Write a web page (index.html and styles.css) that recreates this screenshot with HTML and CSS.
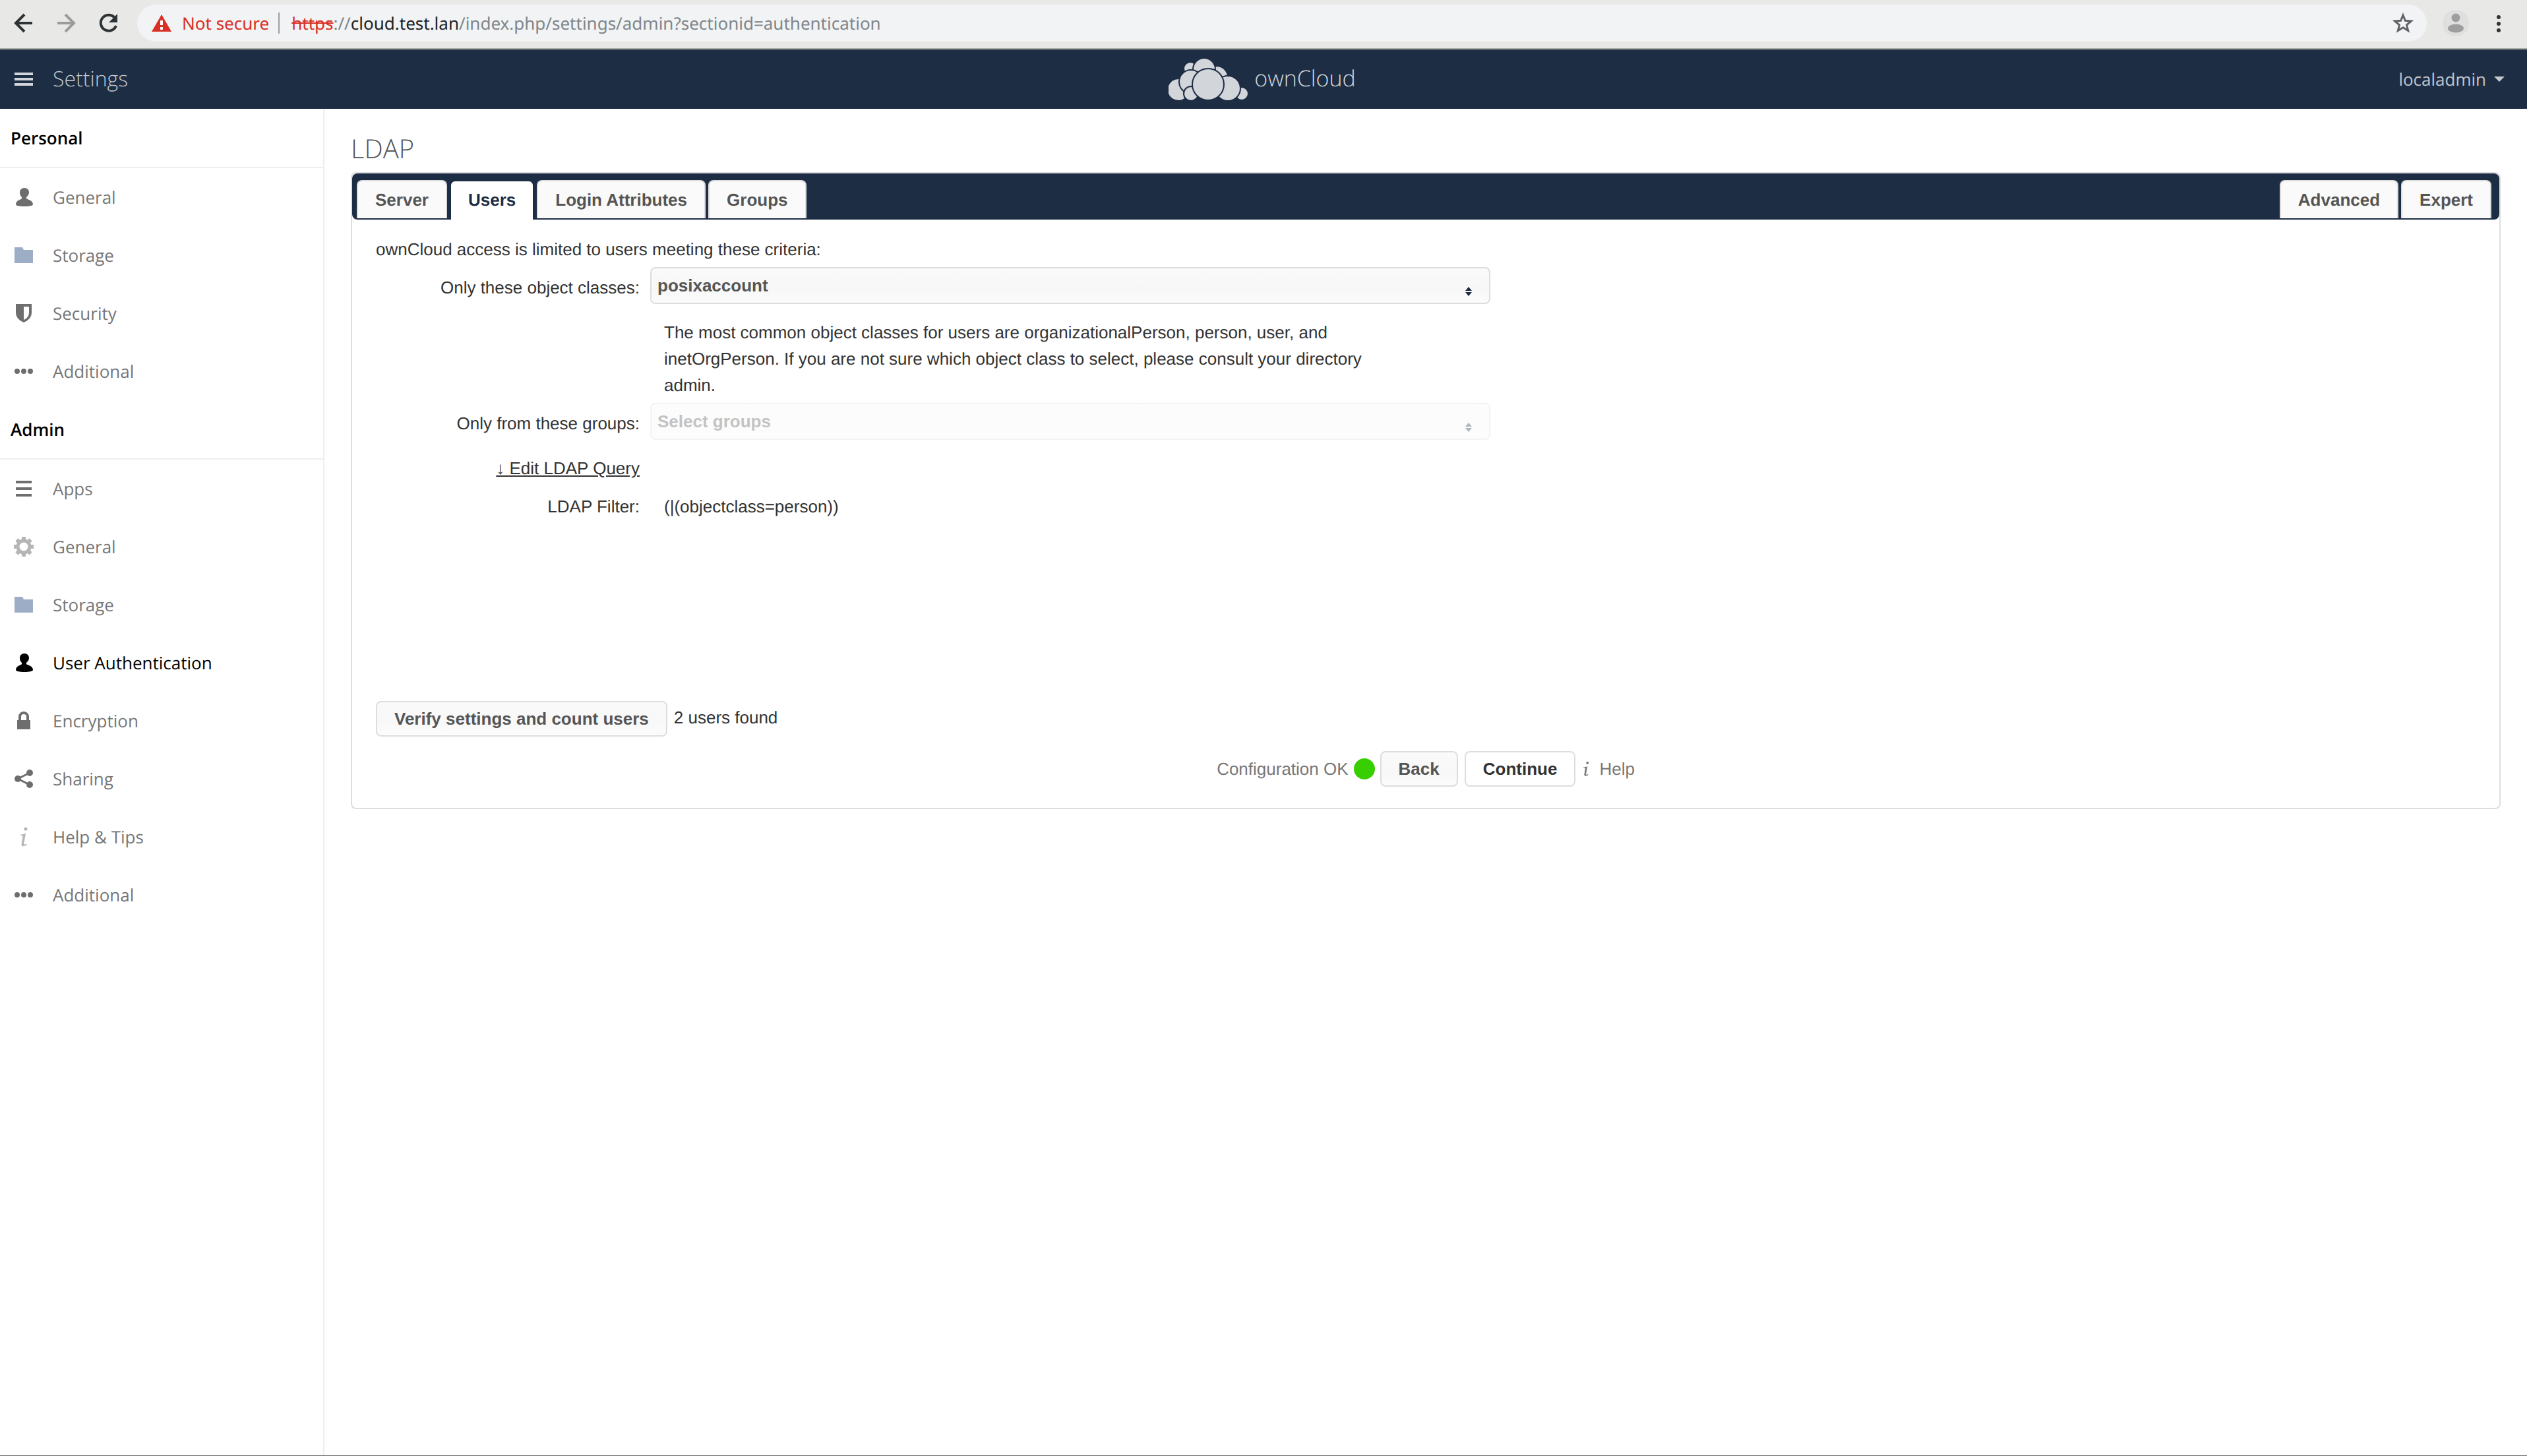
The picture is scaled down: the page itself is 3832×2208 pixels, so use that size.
FILE: index.html
```html
<!DOCTYPE html>
<html lang="en">
<head>
<meta charset="utf-8">
<title>Settings - ownCloud</title>
<link rel="stylesheet" href="styles.css">
</head>
<body>
<svg class="symbols" aria-hidden="true">
  <symbol id="user" viewBox="0 0 32 32"><path d="M17 2c-4.500 0-7 3-7 7 0 3 1 5 3 7v2c-1 2-9 2.500-9 9 0 2 5 3 13 3s13-1 13-3c0-6.500-8-7-10-9v-2c2-2 4-4 4-7 0-4-2.500-7-7-7z"/></symbol>
  <symbol id="folder" viewBox="0 0 32 32"><path d="M2 4h12l2 4h14v20H2z"/></symbol>
  <symbol id="dots" viewBox="0 0 32 32"><circle cx="6" cy="16" r="4"/><circle cx="16" cy="16" r="4"/><circle cx="26" cy="16" r="4"/></symbol>
  <symbol id="info" viewBox="0 0 32 32"><circle cx="19" cy="4" r="2.600"/><path d="M11 13l8-2-3 16c0 1.500 2 .500 4-.500l.500 1.500c-3 2.500-8 3.500-8 0l2-13c0-1.500-1.500-1-3.500-.500z"/></symbol>
</svg>

<div class="toolbar">
  <button class="tool" aria-label="Back"><svg viewBox="0 0 32 32"><path d="M29 16H5M17 3L4 16l13 13" fill="none" stroke="#2e3436" stroke-width="4"/></svg></button>
  <button class="tool" aria-label="Forward"><svg viewBox="0 0 32 32"><path d="M3 16h24M15 3l13 13-13 13" fill="none" stroke="#9b9c9b" stroke-width="4"/></svg></button>
  <button class="tool" aria-label="Reload"><svg viewBox="0 0 32 32"><path d="M26 8A12 12 0 1 0 28 20" fill="none" stroke="#2e3436" stroke-width="4"/><path d="M30 2v13H17z" fill="#2e3436"/></svg></button>
  <div class="address">
    <svg class="warning" viewBox="0 0 30 26"><path d="M15 0l15 26H0z" fill="#d93025"/><path d="M13 9h4v7h-4zM13 19h4v4h-4z" fill="#fff"/></svg>
    <span class="insecure">Not secure</span>
    <span class="divider"></span>
    <span class="url"><s>https</s>://<b>cloud.test.lan</b>/index.php/settings/admin?sectionid=authentication</span>
    <button class="tool star" aria-label="Bookmark"><svg viewBox="0 0 32 32"><path d="M16 4l3.400 8.300 9 .700-6.900 5.800 2.200 8.700L16 22.700l-7.700 4.800 2.200-8.700L3.600 13l9-.700z" fill="none" stroke="#5f6368" stroke-width="3"/></svg></button>
  </div>
  <button class="avatar" aria-label="Profile"><svg viewBox="0 0 40 40"><circle cx="20" cy="20" r="20" fill="#dfdfdf"/><circle cx="20" cy="12" r="6.500" fill="#9e9e9e"/><ellipse cx="20" cy="28" rx="12" ry="6.500" fill="#9e9e9e"/></svg></button>
  <button class="tool" aria-label="Menu"><svg viewBox="0 0 32 32" fill="#2e3436"><circle cx="16" cy="7" r="3"/><circle cx="16" cy="17" r="3"/><circle cx="16" cy="27" r="3"/></svg></button>
</div>

<header class="header">
  <a class="app-menu" href="#"><svg viewBox="0 0 28 20"><path d="M0 0h28v4H0zM0 8h28v4H0zM0 16h28v4H0z" fill="#d2d5da"/></svg>Settings</a>
  <a class="logo" href="#">
    <svg viewBox="0 0 120 64" fill="#d2d5da" stroke="#1d2d44" stroke-width="2">
      <circle cx="33" cy="16" r="10"/><circle cx="73" cy="29" r="17"/><circle cx="54" cy="17" r="17"/>
      <circle cx="15" cy="48" r="17"/><circle cx="34" cy="36" r="18"/><circle cx="34" cy="54" r="11"/>
      <circle cx="111" cy="54" r="10"/><circle cx="90" cy="46" r="19"/><circle cx="60" cy="40" r="24"/>
    </svg>
    <span>ownCloud</span></a>
  <a class="account" href="#">localadmin<svg viewBox="0 0 16 8"><path d="M0 0h16L8 8z" fill="#c6c8cb"/></svg></a>
</header>

<div class="content">
  <nav class="sidebar">
    <h2>Personal</h2>
    <a href="#"><svg><use href="#user"/></svg>General</a>
    <a href="#"><svg class="blue"><use href="#folder"/></svg>Storage</a>
    <a href="#"><svg viewBox="0 0 32 32"><path fill-rule="evenodd" d="M4 2h24v13c0 7-5 12-12 15C9 27 4 22 4 15zM16 6v20c5-2 8-6 8-11V6z"/></svg>Security</a>
    <a href="#"><svg><use href="#dots"/></svg>Additional</a>
    <h2>Admin</h2>
    <a href="#"><svg viewBox="0 0 32 32"><path d="M4 4h24v4H4zM4 14h24v4H4zM4 24h24v4H4z"/></svg>Apps</a>
    <a href="#"><svg class="faint" viewBox="0 0 32 32"><circle cx="16" cy="16" r="9" fill="none" stroke="currentColor" stroke-width="5"/><path d="M16 1v6M16 25v6M1 16h6M25 16h6M5.400 5.400l4 4M22.600 22.600l4 4M5.400 26.600l4-4M22.600 9.400l4-4" stroke="currentColor" stroke-width="6"/></svg>General</a>
    <a href="#"><svg class="blue"><use href="#folder"/></svg>Storage</a>
    <a class="current" href="#"><svg><use href="#user"/></svg>User Authentication</a>
    <a href="#"><svg viewBox="0 0 32 32"><path d="M6 15h20v14H6z"/><path d="M10 16v-6c0-8 12-8 12 0v6" fill="none" stroke="currentColor" stroke-width="4"/></svg>Encryption</a>
    <a href="#"><svg viewBox="0 0 32 32"><path d="M25 7L7 16l18 9" fill="none" stroke="currentColor" stroke-width="3"/><circle cx="25" cy="7" r="5"/><circle cx="7" cy="16" r="5"/><circle cx="25" cy="25" r="5"/></svg>Sharing</a>
    <a href="#"><svg class="faint"><use href="#info"/></svg>Help &amp; Tips</a>
    <a href="#"><svg><use href="#dots"/></svg>Additional</a>
  </nav>

  <main class="main">
    <h1>LDAP</h1>
    <section class="panel">
      <div class="tabs">
        <a class="tab" href="#">Server</a>
        <a class="tab active" href="#">Users</a>
        <a class="tab" href="#">Login Attributes</a>
        <a class="tab" href="#">Groups</a>
        <a class="tab push" href="#">Advanced</a>
        <a class="tab" href="#">Expert</a>
      </div>
      <form class="form">
        <p>ownCloud access is limited to users meeting these criteria:</p>
        <div class="row">
          <label for="classes">Only these object classes:</label>
          <div class="select">
            <select id="classes"><option>posixaccount</option></select>
            <svg viewBox="0 0 10 14"><path d="M5 0l5 6H0zM5 14l5-6H0z"/></svg>
          </div>
        </div>
        <p class="hint">The most common object classes for users are organizationalPerson, person, user, and inetOrgPerson. If you are not sure which object class to select, please consult your directory admin.</p>
        <div class="row">
          <label for="groups">Only from these groups:</label>
          <div class="select disabled">
            <select id="groups" disabled><option>Select groups</option></select>
            <svg viewBox="0 0 10 14"><path d="M5 0l5 6H0zM5 14l5-6H0z"/></svg>
          </div>
        </div>
        <div class="row edit"><a href="#">↓ Edit LDAP Query</a></div>
        <div class="row filter"><span>LDAP Filter:</span><output>(|(objectclass=person))</output></div>
        <div class="verify">
          <button type="button" class="button">Verify settings and count users</button>
          <span>2 users found</span>
        </div>
        <div class="actions">
          <span>Configuration OK</span>
          <span class="status"></span>
          <button type="button" class="button">Back</button>
          <button type="button" class="button primary">Continue</button>
          <a class="help" href="#"><svg><use href="#info"/></svg>Help</a>
        </div>
      </form>
    </section>
  </main>
</div>
</body>
</html>
```

FILE: styles.css
```css
* {
  box-sizing: border-box;
}

body {
  display: flex;
  flex-direction: column;
  min-height: 100vh;
  margin: 0;
  border-bottom: 1px solid #666;
  background: #fff;
  color: #333;
  font: 26px/40px "Liberation Sans", Arial, sans-serif;
  text-rendering: geometricPrecision;
}

a {
  color: inherit;
  text-decoration: none;
}

button {
  padding: 0;
  border: 0;
  background: none;
  font: inherit;
}

svg {
  display: block;
  flex: none;
}

.symbols {
  position: absolute;
  width: 0;
  height: 0;
}

/* Browser toolbar */
.toolbar {
  display: flex;
  align-items: center;
  gap: 32px;
  height: 75px;
  padding: 0 27px 3px 20px;
  border-bottom: 2px solid #a9ada5;
  background: #e8e8e6;
  font: 26px/40px "Noto Sans", sans-serif;
}

.tool,
.tool svg {
  width: 32px;
  height: 32px;
}

.avatar,
.avatar svg {
  width: 40px;
  height: 40px;
}

.toolbar .avatar {
  margin: 0 -3px 0 -8px;
}

.address {
  display: flex;
  flex: 1;
  align-items: center;
  height: 56px;
  margin-left: -4px;
  padding: 0 20px 0 22px;
  border-radius: 28px;
  background: #f1f3f4;
  color: #80868b;
}

.warning {
  width: 30px;
  height: 26px;
}

.insecure {
  margin-left: 16px;
  color: #d93025;
}

.divider {
  width: 2px;
  height: 32px;
  margin: 0 18px 0 14px;
  background: #9aa0a6;
}

.url {
  flex: 1;
}

.url s {
  color: #d93025;
}

.url b {
  color: #202124;
  font-weight: 400;
}

/* Application header */
.header {
  display: grid;
  grid-template-columns: 1fr auto 1fr;
  align-items: center;
  height: 90px;
  padding: 0 34px 0 22px;
  background: #1d2d44;
  color: #c2c6cc;
  font-family: "Open Sans", sans-serif;
}

.app-menu {
  display: flex;
  align-items: center;
  gap: 30px;
  font-size: 32px;
  font-weight: 300;
}

.app-menu svg {
  width: 28px;
  height: 20px;
}

.logo {
  display: flex;
  align-items: center;
  gap: 10px;
  margin-left: 8px;
  color: #d2d5da;
  font-size: 34px;
  font-weight: 300;
}

.logo span {
  padding-bottom: 4px;
}

.logo svg {
  width: 120px;
  height: 64px;
}

.account {
  display: flex;
  justify-self: end;
  align-items: center;
  gap: 12px;
}

.account svg {
  width: 16px;
  height: 8px;
}

.content {
  display: flex;
  flex: 1;
}

/* Settings navigation */
.sidebar {
  flex: none;
  width: 492px;
  border-right: 2px solid #eee;
  color: #767676;
  font-family: "Open Sans", sans-serif;
}

.sidebar h2 {
  margin: 0;
  padding: 24px 16px;
  border-bottom: 2px solid #eee;
  color: #000;
  font-size: 26px;
  font-weight: 600;
}

.sidebar a {
  display: flex;
  align-items: center;
  gap: 28px;
  padding: 24px 20px;
}

.sidebar svg {
  width: 32px;
  height: 32px;
  color: #6e6e6e;
  fill: currentColor;
}

.sidebar .blue {
  color: #9dadc6;
}

.sidebar .faint {
  color: #b5b5b5;
}

.sidebar .current,
.sidebar .current svg {
  color: #000;
}

/* LDAP panel */
.main {
  flex: 1;
  padding: 32px 40px;
}

h1 {
  margin: 0 0 8px;
  color: #555;
  font: 300 40px/56px "Open Sans", sans-serif;
}

.panel {
  border: 2px solid #ddd;
  border-radius: 8px;
}

.tabs {
  display: flex;
  gap: 4px;
  padding: 10px 12px 0 7px;
  border-radius: 8px;
  background: #1d2d44;
}

.tab {
  margin-bottom: 2px;
  padding: 8px 26px;
  border: 2px solid #ddd;
  border-bottom: 0;
  border-radius: 8px 8px 0 0;
  background: #fafafa;
  color: #555;
  font-weight: 700;
}

.tab.active {
  margin-bottom: 0;
  border-color: #1d2d44;
  background: #fff;
  color: #1d2d44;
}

.tab.push {
  margin-left: auto;
}

.form {
  padding: 25px 36px 32px;
}

.form p {
  margin: 0 0 7px;
}

.row {
  display: flex;
  gap: 16px;
}

.row label,
.row span,
.row a {
  flex: none;
  width: 400px;
  text-align: right;
}

.row label {
  padding-top: 11px;
}

.select {
  position: relative;
  flex: 0 1 1274px;
}

.select select {
  display: block;
  width: 100%;
  height: 56px;
  padding: 0 9px;
  border: 2px solid #ddd;
  border-radius: 8px;
  appearance: none;
  background: linear-gradient(#fafafa, #f7f7f7 60%, #fcfcfc);
  color: #555;
  font: inherit;
  font-weight: 700;
  opacity: 1;
}

.select svg {
  position: absolute;
  right: 28px;
  bottom: 12px;
  width: 10px;
  height: 14px;
  fill: #1d2d44;
}

.select.disabled {
  opacity: .35;
}

.form .hint {
  max-width: 1516px;
  margin-top: 23px;
  padding-left: 437px;
}

.edit {
  margin-top: 23px;
}

.row.edit a {
  text-align: right;
  text-decoration: underline;
}

.filter {
  gap: 37px;
  margin-top: 18px;
}

.verify {
  display: flex;
  align-items: flex-start;
  gap: 10px;
  margin-top: 275px;
}

.verify span {
  padding-top: 5px;
}

.button {
  padding: 5px 26px;
  border: 2px solid #ddd;
  border-radius: 8px;
  background: linear-gradient(#fafafa, #f8f8f8 60%, #fcfcfc);
  color: #555;
  font-weight: 700;
}

.button.primary {
  margin-left: 2px;
  background: #fff;
  color: #333;
}

.actions {
  display: flex;
  justify-content: center;
  align-items: center;
  gap: 8px;
  margin-top: 22px;
  color: #777;
}

.status {
  width: 32px;
  height: 32px;
  border-radius: 50%;
  background: #37ce02;
}

.help {
  display: flex;
  align-items: center;
  gap: 8px;
  margin-left: -4px;
}

.help svg {
  width: 24px;
  height: 24px;
  fill: #777;
}
```
